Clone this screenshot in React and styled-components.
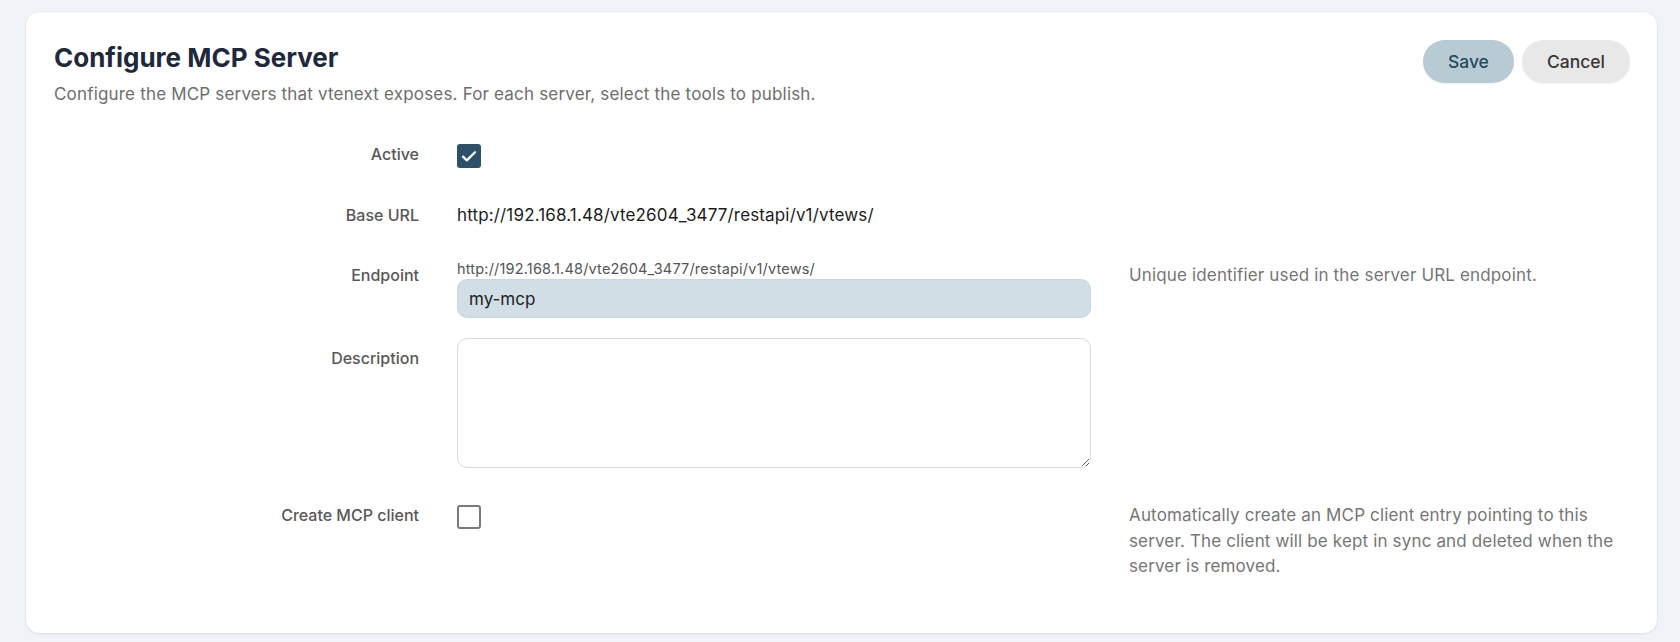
import React from "react";
import styled, { createGlobalStyle } from "styled-components";

const Global = createGlobalStyle`
  html, body { margin: 0; padding: 0; }
  body {
    background: #f0f4f9;
    font-family: Inter, "Noto Sans", sans-serif;
    -webkit-font-smoothing: antialiased;
  }
  * { box-sizing: border-box; }
`;

const Page = styled.div`
  padding: 12px 23px 10px 26px;
`;

const Card = styled.section`
  background: #ffffff;
  border-radius: 14px;
  box-shadow: 0 1px 3px rgba(15, 30, 60, 0.08), 0 0 0 1px rgba(15, 30, 60, 0.02);
  padding: 28px 27px 53px 28px;
`;

const Header = styled.header`
  display: flex;
  justify-content: space-between;
  align-items: flex-start;
`;

const TitleBlock = styled.div`
  display: flex;
  flex-direction: column;
  gap: 6px;
`;

const Title = styled.h1`
  margin: 0;
  font-size: 26px;
  line-height: 36px;
  font-weight: 700;
  color: #1e293b;
`;

const Subtitle = styled.p`
  margin: 0;
  font-size: 17px;
  line-height: 24px;
  letter-spacing: 0.18px;
  color: #6e6e6e;
`;

const Actions = styled.div`
  display: flex;
  gap: 8px;
`;

const Button = styled.button`
  height: 43px;
  padding: 0 25px;
  border: none;
  border-radius: 22px;
  font-family: inherit;
  font-size: 17.5px;
  font-weight: 500;
  cursor: pointer;
  background: ${(p) => (p.$variant === "primary" ? "#b8cbd4" : "#e8e8e8")};
  color: ${(p) => (p.$variant === "primary" ? "#264a61" : "#363636")};
  box-shadow: 0 1px 2px rgba(0, 0, 0, 0.06);
`;

const Form = styled.div`
  display: flex;
  flex-direction: column;
  margin-top: 38px;
`;

const Row = styled.div`
  display: grid;
  grid-template-columns: 365px 634px 1fr;
  column-gap: 38px;
  align-items: start;
  margin-top: ${(p) => p.$gap || 0}px;
`;

const Label = styled.div`
  text-align: right;
  font-size: 16px;
  line-height: 20px;
  font-weight: 500;
  color: #585858;
  padding-top: ${(p) => p.$offset || 0}px;
`;

const Field = styled.div`
  display: flex;
  flex-direction: column;
`;

const Help = styled.div`
  font-size: 17px;
  line-height: 25.5px;
  letter-spacing: 0.15px;
  color: #767676;
  margin-top: ${(p) => p.$offset || 0}px;
`;

const Value = styled.div`
  font-size: 17px;
  line-height: 24px;
  letter-spacing: 0.15px;
  color: #1c1c1c;
`;

const Hint = styled.div`
  font-size: 14.5px;
  line-height: 18px;
  letter-spacing: 0.18px;
  color: #555555;
  margin-bottom: 1px;
`;

const TextInput = styled.input`
  width: 100%;
  height: 39px;
  border: 1px solid #c9d7df;
  border-radius: 10px;
  background: #d1dee5;
  padding: 0 11px;
  font-family: inherit;
  font-size: 17px;
  color: #222;
  outline: none;
`;

const TextArea = styled.textarea`
  width: 100%;
  height: 130px;
  border: 1px solid #d3dce3;
  border-radius: 10px;
  background: #fff;
  padding: 10px 11px;
  font-family: inherit;
  font-size: 17px;
  resize: vertical;
  outline: none;
  display: block;
`;

const Box = styled.span`
  display: inline-flex;
  align-items: center;
  justify-content: center;
  width: 24px;
  height: 24px;
  border-radius: 3px;
  background: ${(p) => (p.$checked ? "#2d5169" : "#fff")};
  border: ${(p) => (p.$checked ? "none" : "2px solid #7a7a7a")};
`;

function Checkbox({ checked }) {
  return (
    <Box $checked={checked} role="checkbox" aria-checked={checked}>
      {checked && (
        <svg width="24" height="24" viewBox="0 0 24 24" fill="none">
          <path d="M6 12.6l3.8 3.8L18 8.2" stroke="#fff" strokeWidth="2.2" strokeLinecap="round" strokeLinejoin="round" />
        </svg>
      )}
    </Box>
  );
}

export default function App() {
  const url = "http://192.168.1.48/vte2604_3477/restapi/v1/vtews/";
  return (
    <>
      <Global />
      <Page>
        <Card>
          <Header>
            <TitleBlock>
              <Title>Configure MCP Server</Title>
              <Subtitle>
                Configure the MCP servers that vtenext exposes. For each server, select the tools to publish.
              </Subtitle>
            </TitleBlock>
            <Actions>
              <Button $variant="primary">Save</Button>
              <Button>Cancel</Button>
            </Actions>
          </Header>

          <Form>
            <Row>
              <Label $offset={0}>Active</Label>
              <Field>
                <Checkbox checked />
              </Field>
              <div />
            </Row>

            <Row $gap={35}>
              <Label $offset={2}>Base URL</Label>
              <Field>
                <Value>{url}</Value>
              </Field>
              <div />
            </Row>

            <Row $gap={33}>
              <Label $offset={5}>Endpoint</Label>
              <Field>
                <Hint>{url}</Hint>
                <TextInput defaultValue="my-mcp" />
              </Field>
              <Help $offset={3}>Unique identifier used in the server URL endpoint.</Help>
            </Row>

            <Row $gap={20}>
              <Label $offset={10}>Description</Label>
              <Field>
                <TextArea />
              </Field>
              <div />
            </Row>

            <Row $gap={37}>
              <Label $offset={0}>Create MCP client</Label>
              <Field>
                <Checkbox checked={false} />
              </Field>
              <Help $offset={-2}>
                Automatically create an MCP client entry pointing to this server. The client will be kept in sync and deleted when the server is removed.
              </Help>
            </Row>
          </Form>
        </Card>
      </Page>
    </>
  );
}
